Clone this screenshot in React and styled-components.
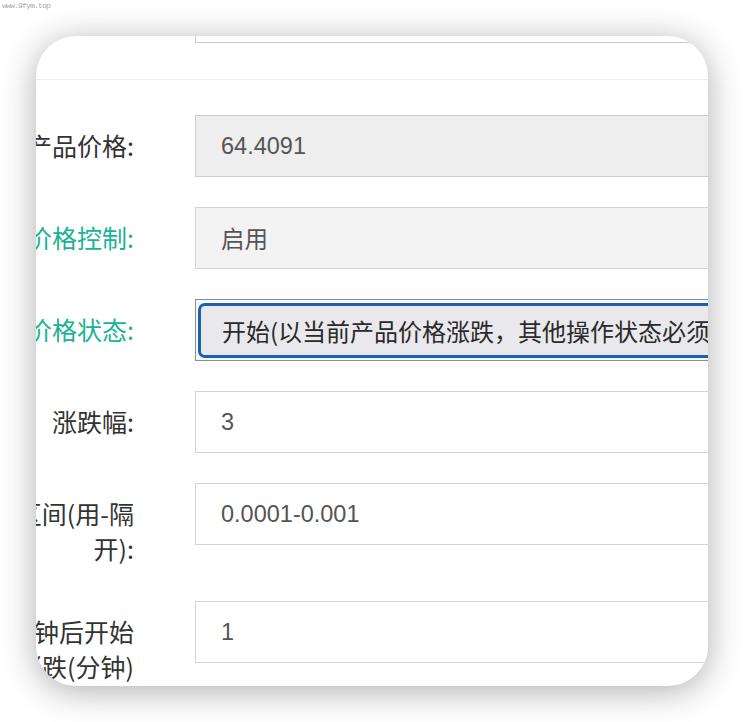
import React from "react";
import styled, { createGlobalStyle } from "styled-components";

const Global = createGlobalStyle`
  html, body { margin: 0; padding: 0; background: #ffffff; }
  body { font-family: "Liberation Sans", "Noto Sans CJK SC", sans-serif; }
`;

const Page = styled.div`
  width: 744px;
  height: 722px;
  overflow: hidden;
  background: #ffffff;
`;

const Watermark = styled.div`
  height: 12px;
  padding: 1px 0 0 2px;
  box-sizing: border-box;
  font-family: "Liberation Mono", monospace;
  font-size: 8px;
  line-height: 10px;
  letter-spacing: -0.8px;
  color: #a8a8a8;
`;

const Card = styled.div`
  margin: 24px 0 0 36px;
  width: 672px;
  height: 650px;
  border-radius: 40px;
  background: #ffffff;
  overflow: hidden;
  box-shadow: 0 5px 34px rgba(0, 0, 0, 0.32);
`;

const PrevInput = styled.div`
  margin-left: 159px;
  height: 6px;
  border: 1px solid #cfcfcf;
  border-top: none;
  border-right: none;
`;

const Divider = styled.div`
  margin-top: 36px;
  height: 1px;
  background: #ececec;
`;

const Form = styled.div`
  margin: 35px 0 0 -90px;
  display: grid;
  grid-template-columns: 188px 640px;
  column-gap: 61px;
  row-gap: 30px;
  align-items: start;
`;

const Label = styled.div`
  padding: 13px 0 5px;
  text-align: right;
  white-space: nowrap;
  font-family: "Noto Sans CJK SC", sans-serif;
  font-size: 25px;
  line-height: 35px;
  color: ${(p) => (p.$accent ? "#1ab394" : "#333333")};
`;

const Field = styled.div`
  height: 62px;
  box-sizing: border-box;
  display: flex;
  align-items: center;
  padding-left: 25px;
  border: 1px solid ${(p) => (p.$tone === "disabled" ? "#cccccc" : "#d4d4d4")};
  background: ${(p) =>
    p.$tone === "disabled" ? "#eeeeee" : p.$tone === "readonly" ? "#f3f3f3" : "#ffffff"};
  font-family: "Liberation Sans", "Noto Sans CJK SC", sans-serif;
  font-size: 23.5px;
  color: #555555;
  white-space: nowrap;
  overflow: hidden;
`;

const SelectOuter = styled.div`
  height: 62px;
  box-sizing: border-box;
  border: 1px solid #8c8c8c;
  padding: 3px 0 2px 2px;
  background: #f7f7f7;
`;

const SelectRing = styled.div`
  height: 100%;
  box-sizing: border-box;
  border: 3px solid #1d5fb0;
  border-radius: 7px;
  background: #e9e9ed;
  display: flex;
  align-items: center;
  padding-left: 21px;
  font-family: "Noto Sans CJK SC", sans-serif;
  font-size: 24px;
  color: #2a2a2a;
  white-space: nowrap;
  overflow: hidden;
`;

export default function App() {
  return (
    <Page>
      <Global />
      <Watermark>www.9fym.top</Watermark>
      <Card>
        <PrevInput />
        <Divider />
        <Form>
          <Label>产品价格:</Label>
          <Field $tone="disabled">64.4091</Field>

          <Label $accent>价格控制:</Label>
          <Field $tone="readonly">启用</Field>

          <Label $accent>价格状态:</Label>
          <SelectOuter>
            <SelectRing>开始(以当前产品价格涨跌，其他操作状态必须为停止)</SelectRing>
          </SelectOuter>

          <Label>涨跌幅:</Label>
          <Field>3</Field>

          <Label>
            涨跌区间(用-隔
            <br />
            开):
          </Label>
          <Field>0.0001-0.001</Field>

          <Label>
            几分钟后开始
            <br />
            涨跌(分钟)
            <br />:
          </Label>
          <Field>1</Field>
        </Form>
      </Card>
    </Page>
  );
}
